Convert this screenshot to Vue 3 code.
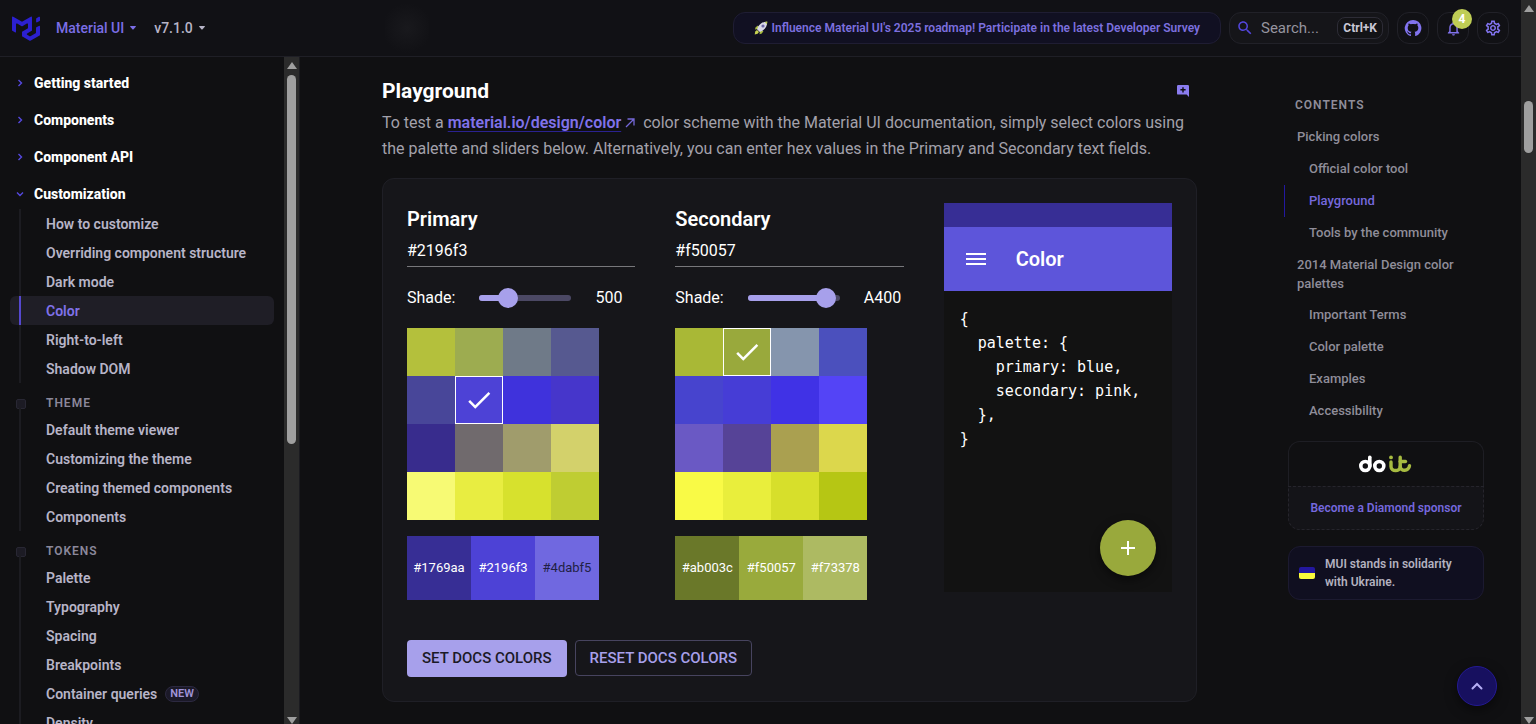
<script setup>
import { ref } from 'vue'

const topSections = ['Getting started', 'Components', 'Component API']

const groups = [
  {
    title: '',
    items: [
      { label: 'How to customize' },
      { label: 'Overriding component structure' },
      { label: 'Dark mode' },
      { label: 'Color', active: true },
      { label: 'Right-to-left' },
      { label: 'Shadow DOM' },
    ],
  },
  {
    title: 'THEME',
    items: [
      { label: 'Default theme viewer' },
      { label: 'Customizing the theme' },
      { label: 'Creating themed components' },
      { label: 'Components' },
    ],
  },
  {
    title: 'TOKENS',
    items: [
      { label: 'Palette' },
      { label: 'Typography' },
      { label: 'Spacing' },
      { label: 'Breakpoints' },
      { label: 'Container queries', tag: 'NEW' },
      { label: 'Density' },
    ],
  },
]

const contents = [
  { label: 'Picking colors', level: 1 },
  { label: 'Official color tool', level: 2 },
  { label: 'Playground', level: 2, active: true },
  { label: 'Tools by the community', level: 2 },
  { label: '2014 Material Design color palettes', level: 1 },
  { label: 'Important Terms', level: 2 },
  { label: 'Color palette', level: 2 },
  { label: 'Examples', level: 2 },
  { label: 'Accessibility', level: 2 },
]

const shades = ['50', '100', '200', '300', '400', '500', '600', '700', '800', '900', 'A100', 'A200', 'A400', 'A700']

const pickers = ref([
  {
    id: 'primary',
    name: 'Primary',
    hex: '#2196f3',
    value: 4,
    shade: '500',
    selected: 5,
    swatches: [
      '#b4c03c', '#9dac50', '#6f7a88', '#565990',
      '#484699', '#4d42d6', '#3f32dc', '#4636cb',
      '#382c8d', '#706a6d', '#a09c6c', '#d3d16b',
      '#f7fa74', '#e8ed41', '#d7e12d', '#bfcd32',
    ],
    bar: [
      { color: '#372e95', text: '#1769aa', ink: '#ffffff' },
      { color: '#4d42d6', text: '#2196f3', ink: '#ffffff' },
      { color: '#7068e0', text: '#4dabf5', ink: '#211f45' },
    ],
  },
  {
    id: 'secondary',
    name: 'Secondary',
    hex: '#f50057',
    value: 11,
    shade: 'A400',
    selected: 1,
    swatches: [
      '#a9b836', '#99a93c', '#8595ad', '#4b50bd',
      '#4744ce', '#463dd6', '#4032e6', '#5444f6',
      '#6a59c4', '#564397', '#aaa050', '#dcd74c',
      '#f9fa46', '#e9ee3c', '#d7df2b', '#b6c614',
    ],
    bar: [
      { color: '#6a7829', text: '#ab003c', ink: '#ffffff' },
      { color: '#99aa3c', text: '#f50057', ink: '#ffffff' },
      { color: '#adba62', text: '#f73378', ink: '#ffffff' },
    ],
  },
])

const code = `{
  palette: {
    primary: blue,
    secondary: pink,
  },
}`
</script>

<template>
  <div class="page">
    <div class="app">
      <header class="topbar">
        <a class="logo" href="#" aria-label="MUI home">
          <svg viewBox="0 0 36 32" width="28" height="25" fill="#2c20d0">
            <path d="M30.343 21.976a1 1 0 00.502-.864l.018-5.787a1 1 0 01.502-.864l3.137-1.802a1 1 0 011.498.867v10.521a1 1 0 01-.502.867l-11.839 6.8a1 1 0 01-.994.001l-9.291-5.314a1 1 0 01-.504-.868v-5.305c0-.006.007-.01.013-.007.005.003.012 0 .012-.007v-.006c0-.004.002-.008.006-.01l7.652-4.396c.007-.004.004-.015-.004-.015a.008.008 0 01-.008-.008l.015-5.201a1 1 0 00-1.5-.87l-5.687 3.277a1 1 0 01-.998 0L6.666 9.7a1 1 0 00-1.499.866v9.4a1 1 0 01-1.496.869l-3.166-1.81a1 1 0 01-.504-.87l.028-16.43A1 1 0 011.527.86l10.845 6.229a1 1 0 00.996 0L24.21.86a1 1 0 011.498.868v16.434a1 1 0 01-.501.867l-5.678 3.27a1 1 0 00.004 1.735l3.132 1.783a1 1 0 00.993-.002l6.685-3.839zM31 7.234a1 1 0 001.514.857l3-1.8A1 1 0 0036 5.434V1.766A1 1 0 0034.486.91l-3 1.8a1 1 0 00-.486.857v3.668z" />
          </svg>
        </a>
        <button class="menu product" type="button">Material UI
          <svg viewBox="0 0 6 4" width="6" height="4" fill="currentColor"><path d="M.5 0h5q.6.2.3.7L3.4 3.4q-.4.4-.8 0L.2.7Q-.1.2.5 0z" /></svg>
        </button>
        <button class="menu version" type="button">v7.1.0
          <svg viewBox="0 0 6 4" width="6" height="4" fill="currentColor"><path d="M.5 0h5q.6.2.3.7L3.4 3.4q-.4.4-.8 0L.2.7Q-.1.2.5 0z" /></svg>
        </button>
        <span class="haze" aria-hidden="true"></span>
        <a class="survey" href="#">
          <svg viewBox="0 0 14 14" width="14" height="14">
            <path d="M4 4.5L1.600 6.200 1 8.500l3-.6zM9.500 10l-1.700 2.400-2.300.8.500-3.200z" fill="#a9bd3f" />
            <path d="M13.200.7C9.600.6 6.800 2 4.300 5.200L3 8.200 5.800 11l3-1.400c3.200-2.500 4.500-5.300 4.400-8.900z" fill="#d9d8e6" />
            <circle cx="9" cy="5" r="1.600" fill="#6d67a8" />
            <path d="M13.300.6l-2.600.3 2.300 2.300z" fill="#b9cb47" />
            <path d="M3 9l2 2-1.400 1.800L.7 13.400l.500-2.900z" fill="#c7d250" />
          </svg>
          <span>Influence Material UI's 2025 roadmap! Participate in the latest Developer Survey</span>
        </a>
        <button class="search" type="button">
          <svg viewBox="0 0 24 24" width="18" height="18" fill="#5346dc"><path d="M15.500 14h-.79l-.28-.27C15.410 12.590 16 11.110 16 9.500 16 5.910 13.090 3 9.500 3S3 5.910 3 9.500 5.910 16 9.500 16c1.610 0 3.090-.59 4.230-1.570l.27.28v.79l5 4.990L20.490 19zm-6 0C7.010 14 5 11.990 5 9.500S7.010 5 9.500 5 14 7.010 14 9.500 11.990 14 9.500 14" /></svg>
          <span class="search-text">Search...</span>
          <kbd>Ctrl+K</kbd>
        </button>
        <a class="icon-btn" href="#" aria-label="GitHub repository">
          <svg viewBox="0 0 24 24" width="18" height="18" fill="currentColor"><path d="M12 1.270a11 11 0 00-3.480 21.460c.55.09.73-.28.73-.55v-1.840c-3.030.64-3.670-1.460-3.670-1.460-.55-1.290-1.280-1.650-1.280-1.650-.92-.65.1-.65.1-.65 1.100 0 1.730 1.100 1.730 1.100.92 1.650 2.570 1.200 3.210.92a2 2 0 01.64-1.470c-2.470-.27-5.040-1.190-5.040-5.500 0-1.100.46-2.100 1.200-2.840a3.760 3.760 0 010-2.930s.91-.28 3.110 1.100c1.800-.49 3.700-.49 5.500 0 2.100-1.380 3.020-1.100 3.020-1.100a3.760 3.760 0 01.1 2.930c.83.74 1.200 1.740 1.200 2.940 0 4.210-2.570 5.130-5.040 5.400.45.370.82.920.82 2.020v3.030c0 .27.100.640.730.550A11 11 0 0012 1.270" /></svg>
        </a>
        <button class="icon-btn" type="button" aria-label="4 unread notifications">
          <svg viewBox="0 0 24 24" width="17" height="17" fill="currentColor"><path d="M12 22c1.100 0 2-.9 2-2h-4c0 1.100.9 2 2 2m6-6v-5c0-3.070-1.630-5.640-4.500-6.320V4c0-.83-.67-1.500-1.500-1.500s-1.500.67-1.500 1.500v.68C7.640 5.360 6 7.920 6 11v5l-2 2v1h16v-1zm-2 1H8v-6c0-2.480 1.510-4.500 4-4.500s4 2.020 4 4.500z" /></svg>
          <span class="badge">4</span>
        </button>
        <button class="icon-btn" type="button" aria-label="Settings">
          <svg viewBox="0 0 24 24" width="18" height="18" fill="currentColor"><path d="M19.430 12.980c.04-.32.07-.64.07-.98s-.03-.66-.07-.98l2.110-1.650c.19-.15.24-.42.12-.64l-2-3.460c-.09-.16-.26-.25-.44-.25-.06 0-.12.010-.17.030l-2.490 1c-.52-.4-1.080-.73-1.690-.98l-.38-2.650C14.460 2.180 14.250 2 14 2h-4c-.25 0-.46.180-.49.420l-.38 2.650c-.61.250-1.170.590-1.690.980l-2.490-1c-.06-.02-.12-.03-.18-.03-.17 0-.34.090-.43.250l-2 3.460c-.13.220-.07.490.12.640l2.110 1.650c-.04.320-.07.650-.07.980s.03.660.07.980l-2.110 1.650c-.19.150-.24.420-.12.640l2 3.460c.09.160.26.250.44.250.06 0 .12-.01.17-.03l2.490-1c.52.400 1.080.730 1.690.980l.38 2.650c.03.240.24.420.49.420h4c.25 0 .46-.18.49-.42l.38-2.650c.61-.25 1.170-.59 1.690-.98l2.490 1c.06.020.12.030.18.030.17 0 .34-.09.43-.25l2-3.460c.12-.22.07-.49-.12-.64zm-1.980-1.710c.04.310.05.520.05.730s-.02.430-.05.730l-.14 1.130.89.700 1.080.840-.7 1.210-1.270-.51-1.040-.42-.9.680c-.43.320-.84.560-1.250.730l-1.060.430-.16 1.130-.2 1.350h-1.400l-.19-1.350-.16-1.130-1.060-.43c-.43-.18-.83-.41-1.230-.71l-.91-.7-1.060.430-1.270.510-.7-1.210 1.080-.84.890-.7-.14-1.130c-.03-.31-.05-.54-.05-.74s.02-.43.050-.73l.14-1.130-.89-.7-1.080-.84.700-1.210 1.270.510 1.040.420.900-.68c.43-.32.840-.56 1.250-.73l1.060-.43.160-1.130.200-1.350h1.390l.19 1.350.16 1.130 1.060.430c.43.180.83.410 1.230.71l.91.700 1.060-.43 1.270-.51.700 1.210-1.070.850-.89.700zM12 8c-2.210 0-4 1.790-4 4s1.790 4 4 4 4-1.790 4-4-1.790-4-4-4m0 6c-1.100 0-2-.9-2-2s.9-2 2-2 2 .9 2 2-.9 2-2 2" /></svg>
        </button>
      </header>

      <div class="body">
        <aside class="sidebar">
          <nav class="nav" aria-label="Documentation">
            <a v-for="s in topSections" :key="s" class="section" href="#">
              <svg viewBox="0 0 6 8" width="6" height="8"><path d="M1.500 1l3 3-3 3" /></svg>{{ s }}
            </a>
            <div class="open-section">
              <a class="section open" href="#">
                <svg viewBox="0 0 8 6" width="8" height="6"><path d="M1 1.500l3 3 3-3" /></svg>Customization
              </a>
              <div v-for="g in groups" :key="g.title" class="group">
                <h2 v-if="g.title" class="group-title">{{ g.title }}</h2>
                <ul>
                  <li v-for="item in g.items" :key="item.label">
                    <a href="#" :class="{ active: item.active }">{{ item.label }}<span v-if="item.tag" class="tag">{{ item.tag }}</span></a>
                  </li>
                </ul>
              </div>
            </div>
          </nav>
          <div class="scroll" aria-hidden="true">
            <span class="arrow up"></span>
            <span class="thumb nav-thumb"></span>
            <span class="arrow down"></span>
          </div>
        </aside>

        <main class="main">
          <article class="article">
            <div class="heading">
              <h1>Playground</h1>
              <button class="comment" type="button" aria-label="Leave a comment">
                <svg viewBox="0 0 12 12" width="12" height="12">
                  <path d="M1.200 0h9.600Q12 0 12 1.200V12L9.600 9.600H1.200Q0 9.600 0 8.400V1.200Q0 0 1.200 0z" fill="#8a7cf0" />
                  <path d="M6 2.200v5.200M3.400 4.800h5.200" stroke="#101014" stroke-width="1.400" />
                </svg>
              </button>
            </div>
            <p class="intro">
              To test a <a href="#">material.io/design/color</a><svg class="ext" viewBox="0 0 10 10" width="10" height="10"><path d="M1 9L8.500 1.500M2.500 1H9v6.500" /></svg>
              color scheme with the Material UI documentation, simply select colors using the palette and sliders below. Alternatively, you can enter hex values in the Primary and Secondary text fields.
            </p>

            <section class="card">
              <div class="columns">
                <div v-for="p in pickers" :key="p.id" class="picker">
                  <label class="picker-name" :for="p.id">{{ p.name }}</label>
                  <input :id="p.id" v-model="p.hex" class="hex" type="text" />
                  <div class="shade-row">
                    <label :for="p.id + '-shade'">Shade:</label>
                    <div class="slider">
                      <span class="rail"></span>
                      <span class="fill" :style="{ width: (p.value / 13) * 100 + '%' }"></span>
                      <input :id="p.id + '-shade'" v-model.number="p.value" type="range" min="0" :max="shades.length - 1" />
                    </div>
                    <span class="shade-value">{{ p.shade }}</span>
                  </div>
                  <div class="swatches">
                    <label v-for="(c, i) in p.swatches" :key="i" class="swatch" :class="{ selected: i === p.selected }" :style="{ backgroundColor: c }">
                      <input v-model="p.selected" type="radio" :name="p.id + '-hue'" :value="i" :aria-label="'Hue ' + (i + 1)" />
                      <svg v-if="i === p.selected" viewBox="0 0 24 24" width="30" height="30" fill="#fff"><path d="M9 16.170L4.830 12l-1.420 1.410L9 19 21 7l-1.410-1.410z" /></svg>
                    </label>
                  </div>
                  <div class="bar">
                    <span v-for="b in p.bar" :key="b.text" :style="{ backgroundColor: b.color, color: b.ink }">{{ b.text }}</span>
                  </div>
                </div>

                <div class="phone">
                  <div class="status"></div>
                  <div class="appbar">
                    <svg viewBox="0 0 20 14" width="20" height="14" stroke="#fff" stroke-width="2"><path d="M0 2h20M0 7h20M0 12h20" /></svg>
                    <span>Color</span>
                  </div>
                  <pre>{{ code }}</pre>
                  <button class="fab" type="button" aria-label="Add">
                    <svg viewBox="0 0 14 14" width="14" height="14" stroke="#fff" stroke-width="2"><path d="M7 0v14M0 7h14" /></svg>
                  </button>
                </div>
              </div>
              <div class="actions">
                <button class="contained" type="button">SET DOCS COLORS</button>
                <button class="outlined" type="button">RESET DOCS COLORS</button>
              </div>
            </section>
          </article>
        </main>

        <aside class="toc">
          <h2>CONTENTS</h2>
          <ul>
            <li v-for="c in contents" :key="c.label">
              <a href="#" :class="['level-' + c.level, { active: c.active }]">{{ c.label }}</a>
            </li>
          </ul>
          <div class="sponsors">
            <a class="doit" href="#" aria-label="doit">
              <svg viewBox="0 0 54 18" width="54" height="18" fill="none" stroke-linecap="round">
                <g stroke="#fff" stroke-width="3.600">
                  <circle cx="6.300" cy="11" r="4.500" />
                  <path d="M10.800 2.200V11" />
                  <circle cx="20.300" cy="11" r="4.500" />
                </g>
                <g stroke="#a7bb41" stroke-width="3.400">
                  <path d="M32 7v4.500c0 5.400 9.200 5.400 9.200 0V2.200" />
                  <path d="M41.200 6.500h5.300" />
                  <path d="M41.200 11.500c0 5.200 9 5 9.300-.8" />
                </g>
                <circle cx="32" cy="2.400" r="1.900" fill="#a7bb41" />
              </svg>
            </a>
            <a class="diamond" href="#">Become a Diamond sponsor</a>
          </div>
          <a class="ukraine" href="#">
            <svg viewBox="0 0 16 12" width="16" height="12">
              <path d="M2 0h12q2 0 2 2v4H0V2q0-2 2-2z" fill="#23179f" />
              <path d="M0 6h16v4q0 2-2 2H2q-2 0-2-2z" fill="#fafa3c" />
            </svg>
            <span>MUI stands in solidarity with Ukraine.</span>
          </a>
        </aside>
      </div>
    </div>

    <div class="scroll page-scroll" aria-hidden="true">
      <span class="arrow up"></span>
      <span class="thumb page-thumb"></span>
      <span class="arrow down"></span>
    </div>

    <button class="to-top" type="button" aria-label="Back to top">
      <svg viewBox="0 0 12 8" width="12" height="8"><path d="M1.500 6.500L6 2l4.500 4.500" /></svg>
    </button>
  </div>
</template>

<style>
html,
body {
  background: #101012;
}
</style>

<style scoped>
* {
  box-sizing: border-box;
}

.page {
  display: flex;
  height: 100vh;
  overflow: hidden;
  background: #101012;
  color: #b7b4c7;
  font-family: "Roboto", sans-serif;
  font-size: 14px;
}

a {
  color: inherit;
  text-decoration: none;
}

button {
  font: inherit;
  color: inherit;
  background: none;
  border: 0;
  padding: 0;
}

ul {
  list-style: none;
  margin: 0;
  padding: 0;
}

.app {
  flex: 1;
  min-width: 0;
  display: flex;
  flex-direction: column;
}

.topbar {
  flex: none;
  display: flex;
  align-items: center;
  gap: 8px;
  height: 57px;
  padding: 0 12px;
  border-bottom: 1px solid #1f1f26;
  background: #111115;
  font-weight: 500;
}

.logo {
  display: flex;
  margin-right: 8px;
}

.menu {
  display: flex;
  align-items: center;
  gap: 6px;
  margin-right: 10px;
}

.product {
  color: #7b6ee6;
}

.haze {
  width: 44px;
  height: 56px;
  margin-left: 162px;
  background: radial-gradient(circle, #19191d, transparent 70%);
}

.survey {
  display: flex;
  align-items: center;
  gap: 4px;
  height: 32px;
  margin-left: auto;
  padding: 0 20px;
  border: 1px solid #1f1d33;
  border-radius: 12px;
  background: #111022;
  color: #7c6fdf;
  font-size: 12px;
  font-weight: 600;
  white-space: nowrap;
}

.search {
  display: flex;
  align-items: center;
  width: 160px;
  height: 32px;
  padding: 0 5px 0 6px;
  border: 1px solid #212128;
  border-radius: 12px;
  background: #151519;
}

.search-text {
  margin-left: 7px;
  color: #96949f;
  font-size: 15px;
  font-weight: 400;
}

kbd {
  margin-left: auto;
  padding: 0 5px;
  border: 1px solid #2d2c36;
  border-radius: 8px;
  background: #131316;
  color: #c9c7d5;
  font: 700 12px/20px "Roboto", sans-serif;
}

.icon-btn {
  position: relative;
  display: flex;
  align-items: center;
  justify-content: center;
  width: 32px;
  height: 32px;
  border: 1px solid #212128;
  border-radius: 12px;
  color: #8173ee;
}

.badge {
  position: absolute;
  top: -4px;
  right: -4px;
  width: 20px;
  height: 20px;
  border-radius: 50%;
  background: #bfcd55;
  color: #fff;
  font-size: 12px;
  font-weight: 700;
  line-height: 20px;
  text-align: center;
}

.body {
  flex: 1;
  min-height: 0;
  display: flex;
}

.sidebar {
  flex: none;
  width: 300px;
  display: flex;
  border-right: 1px solid #1b1b20;
}

.nav {
  flex: 1;
  display: flex;
  flex-direction: column;
  gap: 8px;
  padding: 12px 10px 0;
  overflow: hidden;
}

.section {
  flex: none;
  display: flex;
  align-items: center;
  height: 29px;
  padding-left: 7px;
  padding-bottom: 2px;
  gap: 11px;
  color: #fff;
  font-weight: 800;
}

.section.open {
  padding-left: 6px;
  gap: 10px;
}

.section svg {
  fill: none;
  stroke: #5548e0;
  stroke-width: 1.400;
}

.group-title {
  position: relative;
  height: 32px;
  margin: 0;
  padding: 10px 0 0 36px;
  color: #8b889b;
  font-size: 12px;
  font-weight: 600;
  line-height: 20px;
  letter-spacing: 1px;
}

.group-title::before {
  content: "";
  position: absolute;
  left: 6px;
  top: 16px;
  width: 8px;
  height: 8px;
  border: 1px solid #282733;
  border-radius: 2px;
  background: #1c1b24;
}

.group-title::after {
  content: "";
  position: absolute;
  left: 9px;
  top: 24px;
  bottom: 0;
  width: 2px;
  background: #1c1c21;
}

.group a {
  position: relative;
  display: flex;
  align-items: center;
  height: 29px;
  padding-left: 36px;
  border-radius: 6px;
  font-weight: 600;
}

.group a::before {
  content: "";
  position: absolute;
  left: 9px;
  top: 0;
  bottom: 0;
  width: 2px;
  background: #1c1c21;
}

.group a.active {
  background: #1f1e26;
  color: #8072ea;
}

.group a.active::before {
  background: #5548cf;
}

.tag {
  margin-left: 8px;
  padding: 0 4px;
  border: 1px solid #2c2940;
  border-radius: 8px;
  background: #1b1928;
  color: #a094d8;
  font-size: 11px;
  line-height: 14px;
}

.scroll {
  flex: none;
  display: flex;
  flex-direction: column;
  align-items: center;
  width: 15px;
  padding: 5px 0 0;
  background: #2b2b2b;
}

.arrow {
  border: 5px solid transparent;
}

.arrow.up {
  border-top: 0;
  border-bottom: 7px solid #9f9f9f;
}

.arrow.down {
  margin-top: auto;
  border-bottom: 0;
  border-top: 7px solid #9f9f9f;
}

.thumb {
  width: 9px;
  border-radius: 5px;
  background: #9f9f9f;
}

.nav-thumb {
  height: 369px;
  margin-top: 6px;
}

.page-thumb {
  height: 52px;
  margin-top: 89px;
}

.main {
  flex: 1;
  min-width: 0;
  padding: 0 32px;
  overflow: hidden;
}

.article {
  max-width: 815px;
  margin: 0 auto;
  padding-top: 20px;
}

.heading {
  display: flex;
  align-items: center;
  justify-content: space-between;
  padding-right: 8px;
}

h1 {
  margin: 0;
  color: #fff;
  font-size: 21px;
  font-weight: 700;
  line-height: 28px;
}

.comment {
  display: flex;
}

.intro {
  margin: 5px 0 16px;
  color: #a3a1ab;
  font-size: 16px;
  line-height: 26px;
}

.intro a {
  color: #8072ea;
  font-weight: 600;
  text-decoration: underline;
  text-decoration-color: #2a2190;
  text-underline-offset: 3px;
}

.ext {
  margin: 0 4px;
  fill: none;
  stroke: #7568d8;
  stroke-width: 1.300;
}

.card {
  padding: 24px;
  border: 1px solid #1f1f26;
  border-radius: 12px;
  background: #16161a;
  color: #fff;
}

.columns {
  display: grid;
  grid-template-columns: repeat(3, 1fr);
  gap: 40px;
}

.picker-name {
  display: block;
  font-size: 20px;
  font-weight: 600;
  line-height: 32px;
}

.hex {
  display: block;
  width: 100%;
  height: 32px;
  padding: 0 0 1px;
  border: 0;
  border-bottom: 1px solid #77777b;
  background: none;
  color: #fff;
  font: 16px "Roboto", sans-serif;
}

.shade-row {
  display: flex;
  align-items: center;
  gap: 24px;
  height: 61px;
  font-size: 16px;
}

.slider {
  position: relative;
  width: 92px;
  height: 20px;
}

.rail,
.fill {
  position: absolute;
  left: 0;
  top: 7px;
  height: 6px;
  border-radius: 3px;
  background: #a7a0eb;
}

.rail {
  width: 100%;
  background: #4b4864;
}

.slider input {
  position: absolute;
  left: -10px;
  top: 0;
  width: calc(100% + 20px);
  height: 20px;
  margin: 0;
  appearance: none;
  background: none;
}

.slider input::-webkit-slider-thumb {
  appearance: none;
  width: 20px;
  height: 20px;
  border-radius: 50%;
  background: #a7a0eb;
}

.swatches {
  display: grid;
  grid-template-columns: repeat(4, 48px);
  width: 192px;
}

.swatch {
  display: flex;
  align-items: center;
  justify-content: center;
  height: 48px;
}

.swatch.selected {
  border: 1px solid #fff;
}

.swatch input {
  position: absolute;
  opacity: 0;
}

.bar {
  display: grid;
  grid-template-columns: repeat(3, 1fr);
  width: 192px;
  height: 64px;
  margin-top: 16px;
  font-size: 13px;
  line-height: 64px;
  text-align: center;
}

.phone {
  position: relative;
  align-self: start;
  height: 389px;
  background: #121212;
}

.status {
  height: 24px;
  background: #372e95;
}

.appbar {
  display: flex;
  align-items: center;
  gap: 30px;
  height: 64px;
  padding: 0 22px;
  background: #5d55da;
  font-size: 20px;
  font-weight: 600;
}

pre {
  margin: 0;
  padding: 16px;
  font: 15px/24px "DejaVu Sans Mono", monospace;
}

.fab {
  position: absolute;
  right: 16px;
  bottom: 16px;
  display: flex;
  align-items: center;
  justify-content: center;
  width: 56px;
  height: 56px;
  border-radius: 50%;
  background: #99a93c;
  box-shadow: 0 4px 10px rgba(0, 0, 0, 0.5);
}

.actions {
  display: flex;
  align-items: flex-start;
  gap: 8px;
  margin-top: 40px;
  font-size: 15px;
  font-weight: 500;
  line-height: 24px;
}

.contained {
  padding: 6px 15px;
  border-radius: 4px;
  background: #a7a0eb;
  color: #1b1a26;
  line-height: 25px;
}

.outlined {
  padding: 5px 14px;
  border: 1px solid #47445f;
  border-radius: 4px;
  color: #a7a0eb;
}

.toc {
  flex: none;
  width: 242px;
  padding: 38px 37px 0 5px;
  color: #8f8d99;
  font-size: 13px;
  font-weight: 500;
}

.toc h2 {
  margin: 0 0 6px;
  padding-left: 11px;
  font-size: 12px;
  font-weight: 600;
  line-height: 20px;
  letter-spacing: 1px;
}

.toc li a {
  display: block;
  min-height: 32px;
  padding: 6px 0 6px 12px;
  border-left: 1px solid transparent;
  line-height: 19px;
}

.toc li a.level-2 {
  padding-left: 24px;
}

.toc li a.active {
  border-color: #2318a0;
  color: #7568dd;
}

.sponsors {
  margin: 14px 0 16px 4px;
  font-size: 12px;
  font-weight: 600;
}

.doit,
.diamond {
  display: flex;
  align-items: center;
  justify-content: center;
  height: 45px;
  border: 1px solid #1e1e24;
  border-bottom: 0;
  border-radius: 12px 12px 0 0;
}

.diamond {
  height: 44px;
  border: 1px dashed #26252c;
  border-radius: 0 0 12px 12px;
  background: #141418;
  color: #7568dd;
}

.ukraine {
  display: flex;
  align-items: center;
  gap: 10px;
  margin-left: 4px;
  padding: 8px 20px 8px 10px;
  border: 1px solid #1c1a30;
  border-radius: 12px;
  background: #100f20;
  color: #b3b1bf;
  font-size: 12px;
  font-weight: 600;
  line-height: 18px;
}

.ukraine svg {
  flex: none;
}

.to-top {
  position: fixed;
  right: 39px;
  bottom: 18px;
  display: flex;
  align-items: center;
  justify-content: center;
  width: 40px;
  height: 40px;
  border: 1px solid #241a94;
  border-radius: 50%;
  background: #17105f;
  box-shadow: 0 4px 12px rgba(0, 0, 0, 0.5);
}

.to-top svg {
  fill: none;
  stroke: #b5aef5;
  stroke-width: 2;
  stroke-linecap: round;
}
</style>
